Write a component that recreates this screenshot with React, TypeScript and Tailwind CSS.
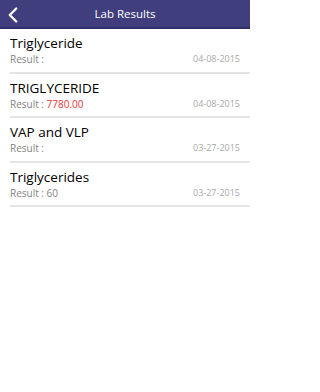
import { ChevronLeft } from "lucide-react";

const results = [
  { name: "Triglyceride", value: "", date: "04-08-2015", alert: false },
  { name: "TRIGLYCERIDE", value: "7780.00", date: "04-08-2015", alert: true },
  { name: "VAP and VLP", value: "", date: "03-27-2015", alert: false },
  { name: "Triglycerides", value: "60", date: "03-27-2015", alert: false },
];

export default function App() {
  return (
    <div className="h-[392px] w-[250px] bg-white font-['Open_Sans',sans-serif]">
      {/* Header */}
      <div className="relative flex h-[29px] items-center justify-center border-b-2 border-[#302e66] bg-[#403e7c]">
        <ChevronLeft
          className="absolute left-[0px] top-[1.5px] h-[26px] w-[26px] text-white"
          strokeWidth={2.2}
        />
        <span className="text-[11.5px] text-white">Lab Results</span>
      </div>

      {/* List */}
      <div className="pl-[10px]">
        {results.map((r) => (
          <div
            key={r.name}
            className="flex h-[44.5px] flex-col justify-center border-b-2 border-[#e4e4e4] pr-[10px] pt-[1px]"
          >
            <div className="text-[13.5px] leading-[17px] text-black">{r.name}</div>
            <div className="flex items-center justify-between text-[10px] leading-[14px]">
              <span className="text-[#858585]">
                Result :{" "}
                <span className={r.alert ? "text-[#e2343a]" : "text-[#858585]"}>
                  {r.value}
                </span>
              </span>
              <span className="text-[9px] text-[#a8a8a8]">{r.date}</span>
            </div>
          </div>
        ))}
      </div>
    </div>
  );
}
